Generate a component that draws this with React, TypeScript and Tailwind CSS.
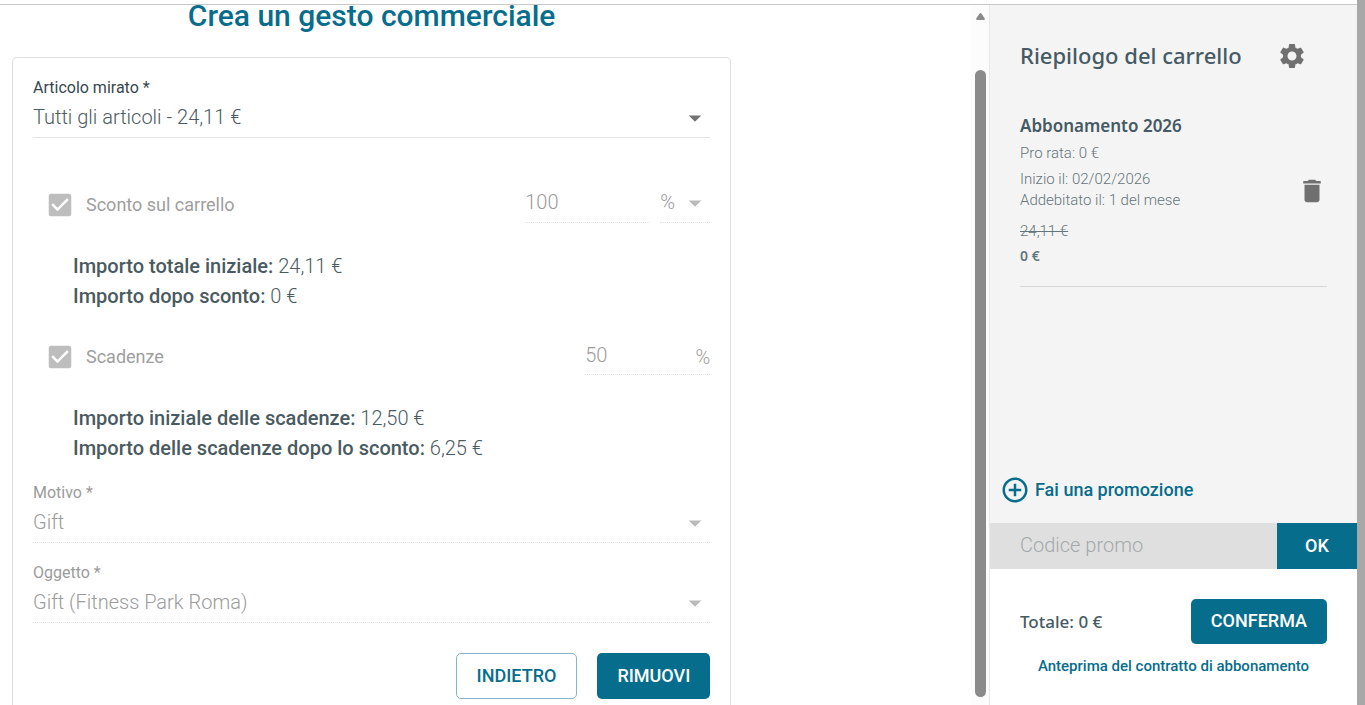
import { useId } from 'react';
import { MdAddCircleOutline, MdArrowDropDown, MdCheckBox, MdDelete, MdSettings } from 'react-icons/md';
import { clsx } from 'clsx';

interface SelectFieldProps {
  label: string;
  value: string;
  disabled?: boolean;
  hideLabel?: boolean;
}

function SelectField({ label, value, disabled = false, hideLabel = false }: SelectFieldProps) {
  const id = useId();

  return (
    <div>
      {!hideLabel && (
        <label
          htmlFor={id}
          className={clsx('block text-base leading-5', disabled ? 'text-[#9b9b9b]' : 'text-[#37474f]')}
        >
          {label}
        </label>
      )}
      <div className="relative">
        <select
          id={id}
          aria-label={hideLabel ? label : undefined}
          disabled={disabled}
          defaultValue={value}
          className={clsx(
            'block w-full h-10 appearance-none border-b bg-transparent pb-0.5 text-xl font-light opacity-100 outline-none',
            disabled ? 'border-dotted border-[#e2e2e2] text-[#9b9b9b]' : 'border-[#e5e5e5] text-[#4a5a61]'
          )}
        >
          <option value={value}>{value}</option>
        </select>
        <MdArrowDropDown
          className={clsx(
            'pointer-events-none absolute right-0 top-[5px] size-[30px]',
            disabled ? 'text-[#b9b9b9]' : 'text-[#737373]'
          )}
        />
      </div>
    </div>
  );
}

interface DiscountCheckboxProps {
  label: string;
}

function DiscountCheckbox({ label }: DiscountCheckboxProps) {
  return (
    <label className="flex flex-1 items-center gap-[11px] pt-1 text-lg text-[#9e9e9e]">
      <span className="relative size-[30px]">
        <input type="checkbox" defaultChecked disabled className="absolute inset-0 size-full appearance-none" />
        <MdCheckBox className="pointer-events-none absolute inset-0 size-full text-[#bdbdbd]" />
      </span>
      {label}
    </label>
  );
}

interface AmountsProps {
  items: { label: string; value: string }[];
}

function Amounts({ items }: AmountsProps) {
  return (
    <div className="px-10 text-xl leading-[30px] text-[#4a5a61]">
      {items.map((item) => (
        <p key={item.label} className="font-light">
          <strong className="font-medium">{item.label}</strong> {item.value}
        </p>
      ))}
    </div>
  );
}

function GestureForm() {
  return (
    <form className="w-3/4 rounded-t-[5px] border border-b-0 border-[#dedede] p-5">
      <SelectField label="Articolo mirato *" value="Tutti gli articoli - 24,11 €" />

      <div className="mt-[45px] flex items-center gap-2.5 pl-3">
        <DiscountCheckbox label="Sconto sul carrello" />
        <input
          aria-label="Valore dello sconto"
          defaultValue="100"
          disabled
          className="h-10 w-[125px] border-b border-dotted border-[#e2e2e2] pb-0.5 text-xl font-light text-[#9b9b9b]"
        />
        <div className="w-[50px]">
          <SelectField label="Tipo di sconto" value="%" disabled hideLabel />
        </div>
      </div>
      <div className="mt-7">
        <Amounts
          items={[
            { label: 'Importo totale iniziale:', value: '24,11 €' },
            { label: 'Importo dopo sconto:', value: '0 €' },
          ]}
        />
      </div>

      <div className="mt-6 flex items-center pl-3">
        <DiscountCheckbox label="Scadenze" />
        <div className="flex h-10 w-[125px] items-center border-b border-dotted border-[#e2e2e2] text-xl font-light text-[#9b9b9b]">
          <input aria-label="Sconto sulle scadenze" defaultValue="50" disabled className="h-full min-w-0 flex-1" />
          <span className="pt-1">%</span>
        </div>
      </div>
      <div className="mt-7">
        <Amounts
          items={[
            { label: 'Importo iniziale delle scadenze:', value: '12,50 €' },
            { label: 'Importo delle scadenze dopo lo sconto:', value: '6,25 €' },
          ]}
        />
      </div>

      <div className="mt-5 flex flex-col gap-5">
        <SelectField label="Motivo *" value="Gift" disabled />
        <SelectField label="Oggetto *" value="Gift (Fitness Park Roma)" disabled />
      </div>

      <div className="mt-[30px] flex justify-end gap-5 text-lg font-medium">
        <button type="button" className="h-[46px] rounded-[5px] border border-[#83b6c6] px-5 text-[#076d8c]">
          INDIETRO
        </button>
        <button type="button" className="h-[46px] rounded-[5px] bg-[#076d8c] px-5 text-white">
          RIMUOVI
        </button>
      </div>
    </form>
  );
}

function ScrollTrack() {
  return (
    <div className="flex w-[18px] shrink-0 flex-col items-center bg-[#fcfcfc] pb-2 pl-px pt-2" aria-hidden="true">
      <svg viewBox="0 0 9 7" className="h-[7px] w-[9px] fill-[#8b8b8b]">
        <path d="M3.6.5Q4.5-.4 5.4.5L8.8 5.6Q9 7 8 7H1Q0 7 .2 5.6Z" />
      </svg>
      <div className="mt-[50px] w-[11px] flex-1 rounded-full bg-[#8b8b8b]" />
    </div>
  );
}

function CartSummary() {
  return (
    <aside className="flex w-[368px] shrink-0 flex-col border-l border-[#e8e8e8] bg-[#f4f4f4]">
      <div className="px-[30px] pt-9">
        <header className="mr-5 flex items-center justify-between">
          <h2 className="pb-0.5 font-['Noto_Sans',sans-serif] text-[22px] font-medium leading-7 text-[#455a64]">
            Riepilogo del carrello
          </h2>
          <button type="button" aria-label="Impostazioni">
            <MdSettings className="size-[30px] text-[#707070]" />
          </button>
        </header>

        <div className="mt-11 flex items-center justify-between border-b border-[#d6d6d6] pb-5">
          <div className="text-[15px] font-light leading-[21px] text-[#66757b]">
            <h3 className="font-['Noto_Sans',sans-serif] text-[17px] font-semibold leading-[22px] text-[#455a64]">
              Abbonamento 2026
            </h3>
            <p className="mt-1.5">Pro rata: 0 €</p>
            <p className="mt-[5px]">Inizio il: 02/02/2026</p>
            <p>Addebitato il: 1 del mese</p>
            <p className="mt-2.5 line-through">24,11 €</p>
            <p className="mt-[3px] font-['Noto_Sans',sans-serif] text-sm font-semibold leading-[21px]">0 €</p>
          </div>
          <button type="button" aria-label="Elimina">
            <MdDelete className="size-[30px] text-[#707070]" />
          </button>
        </div>
      </div>

      <button
        type="button"
        className="mt-auto flex items-center gap-[5px] self-start pb-[18px] pl-2.5 text-lg font-medium leading-[30px] text-[#076d8c]"
      >
        <MdAddCircleOutline className="size-[30px]" />
        Fai una promozione
      </button>

      <div className="flex h-[46px]">
        <input
          aria-label="Codice promo"
          placeholder="Codice promo"
          className="min-w-0 flex-1 bg-[#dfdfdf] pb-0.5 pl-[30px] text-xl font-light outline-none placeholder:text-[#a4a9ab]"
        />
        <button type="button" className="w-20 bg-[#076d8c] text-lg font-medium text-white">
          OK
        </button>
      </div>

      <footer className="bg-white px-[30px] pb-[29px] pt-[30px]">
        <div className="flex items-center justify-between">
          <p className="font-['Noto_Sans',sans-serif] text-[17px] font-medium text-[#455a64]">Totale: 0 €</p>
          <button
            type="button"
            className="h-[45px] rounded-[5px] bg-[#076d8c] px-5 pb-0.5 text-lg font-medium text-white"
          >
            CONFERMA
          </button>
        </div>
        <a href="#contratto" className="mt-3 block text-center text-[15px] font-medium leading-5 text-[#076d8c]">
          Anteprima del contratto di abbonamento
        </a>
      </footer>
    </aside>
  );
}

export default function App() {
  return (
    <div className="flex h-screen overflow-hidden bg-white font-[Roboto,sans-serif]">
      <div className="flex min-w-0 flex-1 flex-col pt-1">
        <div className="flex min-h-0 flex-1 border-t border-[#c8c8c8]">
          <main className="min-w-0 flex-1 overflow-hidden pl-3">
            <h1 className="w-3/4 pb-[30px] text-center text-[30px] font-medium leading-[22px] text-[#076d8c]">
              Crea un gesto commerciale
            </h1>
            <GestureForm />
          </main>
          <ScrollTrack />
          <CartSummary />
        </div>
      </div>
      <div className="w-2 shrink-0 bg-[#a8a8a8]" />
    </div>
  );
}
